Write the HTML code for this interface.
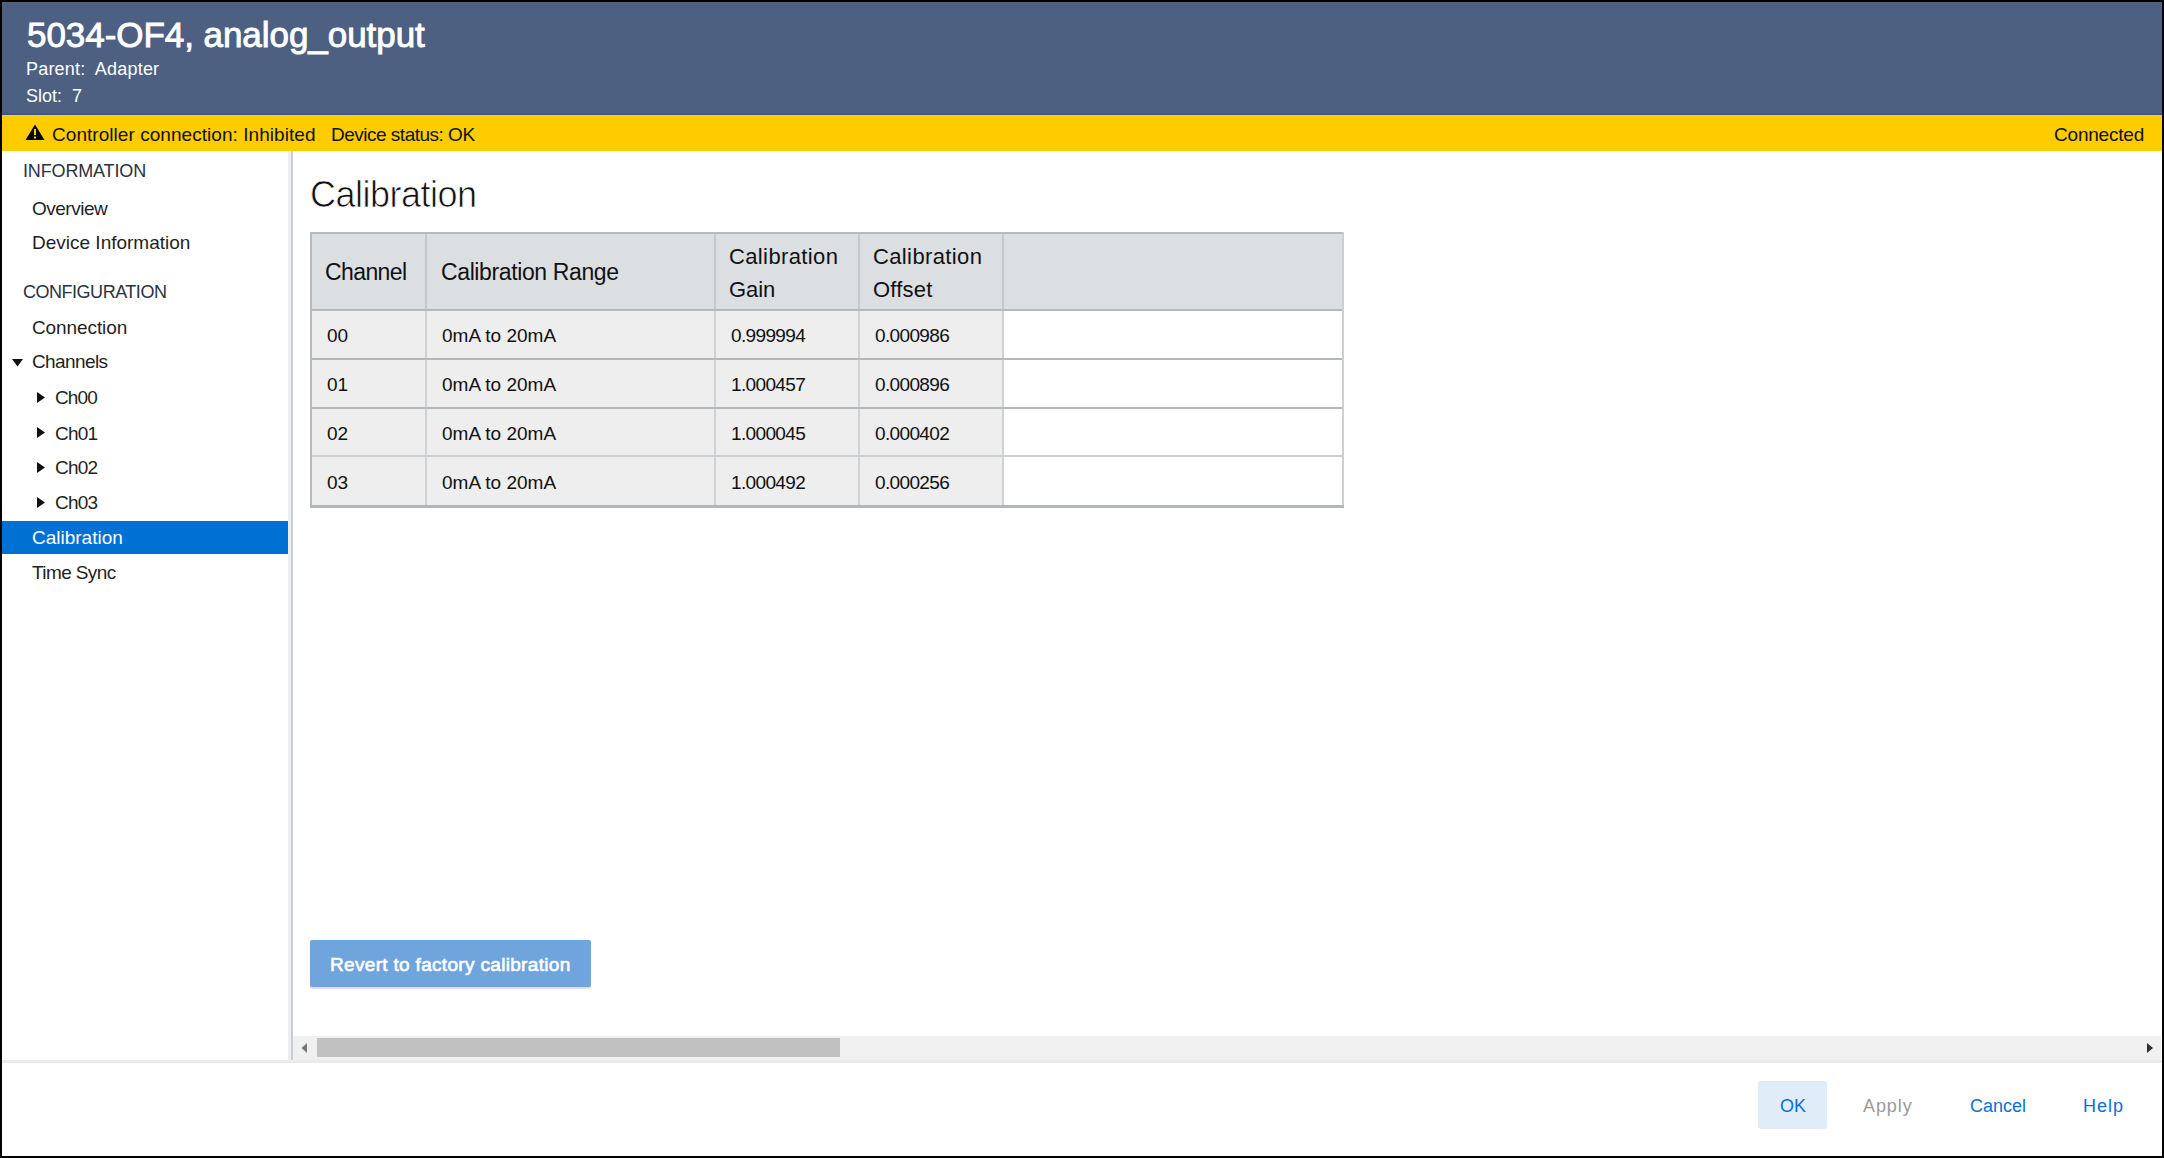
<!DOCTYPE html>
<html><head><meta charset="utf-8">
<style>
html,body{margin:0;padding:0;}
body{width:2164px;height:1158px;background:#000;position:relative;overflow:hidden;font-family:"Liberation Sans",sans-serif;}
#win{position:absolute;left:2px;top:2px;width:2160px;height:1154px;background:#fff;overflow:hidden;}
.a{position:absolute;}
.t{position:absolute;white-space:nowrap;line-height:1;}
#hdr{position:absolute;left:0;top:0;width:2160px;height:113px;background:#4d6082;}
#hdrline{position:absolute;left:0;top:111px;width:2160px;height:2px;background:#40568c;}
#warn{position:absolute;left:0;top:113px;width:2160px;height:36px;background:#ffcc00;}
.w{color:#fff;}
.k{color:#111;}
.side{color:#1f1f1f;}
.sec{color:#2a3240;}
.blue{color:#0a6fd8;}
.gray{color:#9a9a9a;}
</style></head>
<body>
<div id="win">
  <div id="hdr"></div>
  <div id="hdrline"></div>
  <!-- coordinates inside #win are offset by (-2,-2) from screen -->
  <div class="t w" id="title" style="left:25px;top:15px;font-size:35px;font-weight:normal;letter-spacing:-0.05px;-webkit-text-stroke:0.9px #fff;">5034-OF4, analog_output</div>
  <div class="t w" id="parent" style="left:24px;top:58px;font-size:18px;letter-spacing:0.2px;">Parent:&nbsp; Adapter</div>
  <div class="t w" id="slot" style="left:24px;top:85px;font-size:18px;">Slot:&nbsp; 7</div>

  <div id="warn"></div>
  <svg class="a" style="left:23px;top:122px" width="20" height="17" viewBox="0 0 20 17">
    <path d="M10 0.5 L19.5 16 L0.5 16 Z" fill="#000"/>
    <rect x="9" y="5" width="2" height="6" fill="#ffcc00"/>
    <rect x="9" y="12.5" width="2" height="2" fill="#ffcc00"/>
  </svg>
  <div class="t k" id="ctl" style="left:50px;top:123px;font-size:19px;letter-spacing:0.05px;">Controller connection: Inhibited</div>
  <div class="t k" id="dev" style="left:329px;top:123px;font-size:19px;letter-spacing:-0.5px;">Device status: OK</div>
  <div class="t k" id="conn" style="left:2052px;top:123px;font-size:19px;letter-spacing:-0.2px;">Connected</div>

  <!-- sidebar -->
  <div class="a" style="left:286px;top:149px;width:3px;height:909px;background:#eceef2;"></div>
  <div class="a" style="left:289px;top:149px;width:2px;height:909px;background:#c9cdd3;"></div>
  <div class="t sec" id="info" style="left:21px;top:160px;font-size:18px;letter-spacing:-0.15px;">INFORMATION</div>
  <div class="t side" id="ov" style="left:30px;top:197px;font-size:19px;letter-spacing:-0.5px;">Overview</div>
  <div class="t side" id="di" style="left:30px;top:231px;font-size:19px;">Device Information</div>
  <div class="t sec" id="cfg" style="left:21px;top:281px;font-size:18px;letter-spacing:-0.48px;">CONFIGURATION</div>
  <div class="t side" id="cn" style="left:30px;top:316px;font-size:19px;letter-spacing:-0.1px;">Connection</div>
  <svg class="a" style="left:10px;top:357px" width="12" height="8"><path d="M0 0 L11 0 L5.5 7.5 Z" fill="#111"/></svg>
  <div class="t side" id="chs" style="left:30px;top:350px;font-size:19px;letter-spacing:-0.6px;">Channels</div>
  <svg class="a" style="left:35px;top:390px" width="9" height="12"><path d="M0 0 L8 5.5 L0 11 Z" fill="#111"/></svg>
  <div class="t side" id="ch0" style="left:53px;top:386px;font-size:19px;letter-spacing:-0.9px;">Ch00</div>
  <svg class="a" style="left:35px;top:425px" width="9" height="12"><path d="M0 0 L8 5.5 L0 11 Z" fill="#111"/></svg>
  <div class="t side" id="ch1" style="left:53px;top:422px;font-size:19px;letter-spacing:-0.8px;">Ch01</div>
  <svg class="a" style="left:35px;top:460px" width="9" height="12"><path d="M0 0 L8 5.5 L0 11 Z" fill="#111"/></svg>
  <div class="t side" id="ch2" style="left:53px;top:456px;font-size:19px;letter-spacing:-0.8px;">Ch02</div>
  <svg class="a" style="left:35px;top:495px" width="9" height="12"><path d="M0 0 L8 5.5 L0 11 Z" fill="#111"/></svg>
  <div class="t side" id="ch3" style="left:53px;top:491px;font-size:19px;letter-spacing:-0.8px;">Ch03</div>
  <div class="a" style="left:0;top:519px;width:286px;height:33px;background:#0070d3;"></div>
  <div class="t w" id="calsel" style="left:30px;top:526px;font-size:19px;">Calibration</div>
  <div class="t side" id="ts" style="left:30px;top:561px;font-size:19px;letter-spacing:-0.6px;">Time Sync</div>

  <!-- main -->
  <div class="t k" id="h1" style="left:308px;top:175px;font-size:36px;letter-spacing:-0.5px;-webkit-text-stroke:0.7px #fff;">Calibration</div>

<!-- table -->
<div class="a" style="left:310px;top:232px;width:1030px;height:75px;background:#dcdfe2;"></div>
<div class="a" style="left:310px;top:309px;width:690px;height:194px;background:#eeeeee;"></div>
<div class="a" style="left:1002px;top:309px;width:338px;height:194px;background:#ffffff;"></div>
<div class="a" style="left:308px;top:230px;width:1034px;height:2px;background:#b6babd;"></div>
<div class="a" style="left:308px;top:230px;width:2px;height:275px;background:#b6babd;"></div>
<div class="a" style="left:1340px;top:230px;width:2px;height:275px;background:#cdd0d2;"></div>
<div class="a" style="left:308px;top:503px;width:1034px;height:3px;background:#b2b6b9;"></div>
<div class="a" style="left:310px;top:307px;width:1030px;height:2px;background:#b5b9bc;"></div>
<div class="a" style="left:310px;top:356px;width:1030px;height:2px;background:#b4b8bb;"></div>
<div class="a" style="left:310px;top:405px;width:1030px;height:2px;background:#b4b8bb;"></div>
<div class="a" style="left:310px;top:453px;width:1030px;height:2px;background:#ccd0d3;"></div>
<div class="a" style="left:423px;top:232px;width:2px;height:75px;background:#c6c9cc;"></div>
<div class="a" style="left:423px;top:309px;width:2px;height:47px;background:#cfd1d3;"></div>
<div class="a" style="left:423px;top:358px;width:2px;height:47px;background:#cfd1d3;"></div>
<div class="a" style="left:423px;top:407px;width:2px;height:46px;background:#cfd1d3;"></div>
<div class="a" style="left:423px;top:455px;width:2px;height:48px;background:#cfd1d3;"></div>
<div class="a" style="left:712px;top:232px;width:2px;height:75px;background:#c6c9cc;"></div>
<div class="a" style="left:712px;top:309px;width:2px;height:47px;background:#cfd1d3;"></div>
<div class="a" style="left:712px;top:358px;width:2px;height:47px;background:#cfd1d3;"></div>
<div class="a" style="left:712px;top:407px;width:2px;height:46px;background:#cfd1d3;"></div>
<div class="a" style="left:712px;top:455px;width:2px;height:48px;background:#cfd1d3;"></div>
<div class="a" style="left:856px;top:232px;width:2px;height:75px;background:#c6c9cc;"></div>
<div class="a" style="left:856px;top:309px;width:2px;height:47px;background:#cfd1d3;"></div>
<div class="a" style="left:856px;top:358px;width:2px;height:47px;background:#cfd1d3;"></div>
<div class="a" style="left:856px;top:407px;width:2px;height:46px;background:#cfd1d3;"></div>
<div class="a" style="left:856px;top:455px;width:2px;height:48px;background:#cfd1d3;"></div>
<div class="a" style="left:1000px;top:232px;width:2px;height:75px;background:#c6c9cc;"></div>
<div class="a" style="left:1000px;top:309px;width:2px;height:47px;background:#cfd1d3;"></div>
<div class="a" style="left:1000px;top:358px;width:2px;height:47px;background:#cfd1d3;"></div>
<div class="a" style="left:1000px;top:407px;width:2px;height:46px;background:#cfd1d3;"></div>
<div class="a" style="left:1000px;top:455px;width:2px;height:48px;background:#cfd1d3;"></div>
<div class="t k" id="thch" style="left:323px;top:259px;font-size:23px;letter-spacing:-0.6px;">Channel</div>
<div class="t k" id="thrg" style="left:439px;top:259px;font-size:23px;letter-spacing:-0.38px;">Calibration Range</div>
<div class="t k" id="thg1" style="left:727px;top:244px;font-size:22px;letter-spacing:0.37px;">Calibration</div>
<div class="t k" id="thg2" style="left:727px;top:277px;font-size:22px;letter-spacing:-0.1px;">Gain</div>
<div class="t k" id="tho1" style="left:871px;top:244px;font-size:22px;letter-spacing:0.37px;">Calibration</div>
<div class="t k" id="tho2" style="left:871px;top:277px;font-size:22px;letter-spacing:0.2px;">Offset</div>
<div class="t k" id="r0c" style="left:325px;top:324px;font-size:19px;letter-spacing:0px;">00</div>
<div class="t k" id="r0r" style="left:440px;top:324px;font-size:19px;letter-spacing:0px;">0mA to 20mA</div>
<div class="t k" id="r0g" style="left:729px;top:324px;font-size:19px;letter-spacing:-0.65px;">0.999994</div>
<div class="t k" id="r0o" style="left:873px;top:324px;font-size:19px;letter-spacing:-0.65px;">0.000986</div>
<div class="t k" id="r1c" style="left:325px;top:373px;font-size:19px;letter-spacing:0px;">01</div>
<div class="t k" id="r1r" style="left:440px;top:373px;font-size:19px;letter-spacing:0px;">0mA to 20mA</div>
<div class="t k" id="r1g" style="left:729px;top:373px;font-size:19px;letter-spacing:-0.65px;">1.000457</div>
<div class="t k" id="r1o" style="left:873px;top:373px;font-size:19px;letter-spacing:-0.65px;">0.000896</div>
<div class="t k" id="r2c" style="left:325px;top:422px;font-size:19px;letter-spacing:0px;">02</div>
<div class="t k" id="r2r" style="left:440px;top:422px;font-size:19px;letter-spacing:0px;">0mA to 20mA</div>
<div class="t k" id="r2g" style="left:729px;top:422px;font-size:19px;letter-spacing:-0.65px;">1.000045</div>
<div class="t k" id="r2o" style="left:873px;top:422px;font-size:19px;letter-spacing:-0.65px;">0.000402</div>
<div class="t k" id="r3c" style="left:325px;top:471px;font-size:19px;letter-spacing:0px;">03</div>
<div class="t k" id="r3r" style="left:440px;top:471px;font-size:19px;letter-spacing:0px;">0mA to 20mA</div>
<div class="t k" id="r3g" style="left:729px;top:471px;font-size:19px;letter-spacing:-0.65px;">1.000492</div>
<div class="t k" id="r3o" style="left:873px;top:471px;font-size:19px;letter-spacing:-0.65px;">0.000256</div>
<div class="a" style="left:308px;top:938px;width:281px;height:47px;background:#6fa5dc;border-radius:2px;box-shadow:0 1.5px 1px rgba(0,0,0,0.13);"></div>
<div class="t w" id="btn" style="left:328px;top:953px;font-size:19px;letter-spacing:0.32px;font-weight:normal;-webkit-text-stroke:0.6px #fff;">Revert to factory calibration</div>
<div class="a" style="left:291px;top:1034px;width:1868px;height:24px;background:#f0f0f0;"></div>
<div class="a" style="left:315px;top:1036px;width:523px;height:19px;background:#c1c1c1;"></div>
<svg class="a" style="left:297px;top:1039px" width="10" height="14"><path d="M2.5 7 L8 2 L8 12 Z" fill="#777"/></svg>
<svg class="a" style="left:2143px;top:1039px" width="10" height="14"><path d="M2 2 L8 7 L2 12 Z" fill="#333"/></svg>
<div class="a" style="left:1756px;top:1079px;width:69px;height:48px;background:#e0edf9;border-radius:3px;"></div>
<div class="t blue" id="ok" style="left:1778px;top:1095px;font-size:18px;letter-spacing:0px;">OK</div>
<div class="t gray" id="apply" style="left:1861px;top:1095px;font-size:18px;letter-spacing:0.9px;">Apply</div>
<div class="t blue" id="cancel" style="left:1968px;top:1095px;font-size:18px;letter-spacing:0px;">Cancel</div>
<div class="t blue" id="help" style="left:2081px;top:1095px;font-size:18px;letter-spacing:1px;">Help</div>
  <!-- footer -->
  <div class="a" style="left:0;top:1058px;width:2160px;height:3px;background:#e9ebef;"></div>
</div>
</body></html>
